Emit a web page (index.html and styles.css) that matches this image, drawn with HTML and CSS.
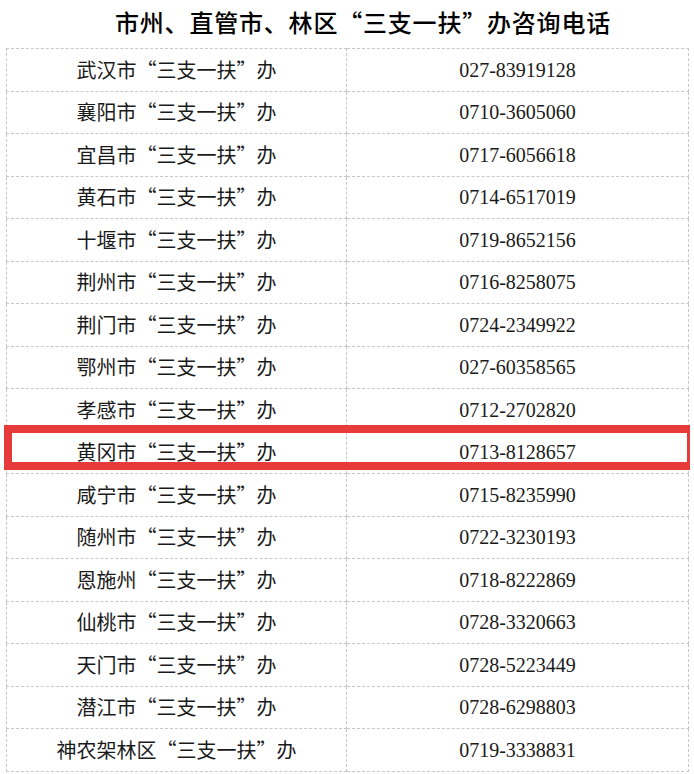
FILE: index.html
```html
<!DOCTYPE html>
<html lang="zh-CN">
<head>
    <meta charset="UTF-8">
    <meta name="viewport" content="width=device-width, initial-scale=1.0">
    <title>三支一扶办咨询电话</title>
    <link rel="stylesheet" href="styles.css">
</head>
<body>
    <div class="page">
        <h1 class="title">市州、直管市、林区“三支一扶”办咨询电话</h1>

        <!-- 咨询电话列表 -->
        <div class="table-wrap">
            <table class="phone-table">
                <tbody>
                    <tr><td class="name">武汉市“三支一扶”办</td><td class="tel">027-83919128</td></tr>
                    <tr><td class="name">襄阳市“三支一扶”办</td><td class="tel">0710-3605060</td></tr>
                    <tr><td class="name">宜昌市“三支一扶”办</td><td class="tel">0717-6056618</td></tr>
                    <tr><td class="name">黄石市“三支一扶”办</td><td class="tel">0714-6517019</td></tr>
                    <tr><td class="name">十堰市“三支一扶”办</td><td class="tel">0719-8652156</td></tr>
                    <tr><td class="name">荆州市“三支一扶”办</td><td class="tel">0716-8258075</td></tr>
                    <tr><td class="name">荆门市“三支一扶”办</td><td class="tel">0724-2349922</td></tr>
                    <tr><td class="name">鄂州市“三支一扶”办</td><td class="tel">027-60358565</td></tr>
                    <tr><td class="name">孝感市“三支一扶”办</td><td class="tel">0712-2702820</td></tr>
                    <tr><td class="name">黄冈市“三支一扶”办</td><td class="tel">0713-8128657</td></tr>
                    <tr><td class="name">咸宁市“三支一扶”办</td><td class="tel">0715-8235990</td></tr>
                    <tr><td class="name">随州市“三支一扶”办</td><td class="tel">0722-3230193</td></tr>
                    <tr><td class="name">恩施州“三支一扶”办</td><td class="tel">0718-8222869</td></tr>
                    <tr><td class="name">仙桃市“三支一扶”办</td><td class="tel">0728-3320663</td></tr>
                    <tr><td class="name">天门市“三支一扶”办</td><td class="tel">0728-5223449</td></tr>
                    <tr><td class="name">潜江市“三支一扶”办</td><td class="tel">0728-6298803</td></tr>
                    <tr><td class="name">神农架林区“三支一扶”办</td><td class="tel">0719-3338831</td></tr>
                </tbody>
            </table>
            <!-- 红框标注：黄冈市 -->
            <div class="mark"></div>
        </div>
    </div>
</body>
</html>
```

FILE: styles.css
```css
body {
    margin: 0;
    padding: 0;
    background: #fff;
    color: #1a1a1a;
    font-family: "Noto Sans CJK SC", sans-serif;
}
.page {
    width: 694px;
    padding: 0 6px;
    box-sizing: border-box;
}
.title {
    margin: 0;
    height: 48px;
    line-height: 44px;
    padding-left: 32px;
    text-align: center;
    font-size: 24px;
    font-weight: 500;
    letter-spacing: 0.8px;
    color: #000;
}
.table-wrap {
    position: relative;
}
.phone-table {
    width: 683px;
    border-collapse: collapse;
    table-layout: fixed;
}
.phone-table td {
    height: 41.5px;
    padding: 0;
    border: 1px dashed #c8c8c8;
    text-align: center;
    font-size: 20px;
    line-height: 24px;
}
.phone-table td.name {
    width: 339px;
}
.phone-table td.tel {
    font-family: "Liberation Serif", "Noto Sans CJK SC", serif;
}
.mark {
    position: absolute;
    left: -2px;
    top: 377px;
    width: 675px;
    height: 29px;
    border: 8px solid #e73a3a;
    border-right-width: 3px;
}
```
